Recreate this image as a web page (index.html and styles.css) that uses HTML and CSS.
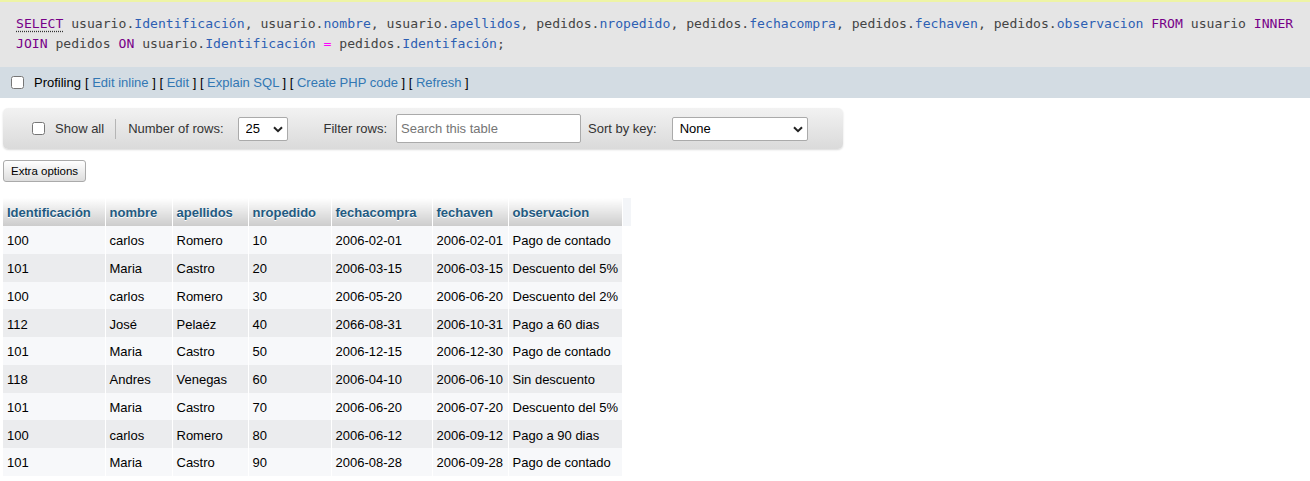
FILE: index.html
```html
<!DOCTYPE html>
<html lang="es">
<head>
<meta charset="utf-8">
<title>SQL result</title>
<link rel="stylesheet" href="styles.css">
</head>
<body>
<div class="sql-box">
  <code class="sql"><span class="kw doc">SELECT</span> usuario.<span class="var">Identificación</span>, usuario.<span class="var">nombre</span>, usuario.<span class="var">apellidos</span>, pedidos.<span class="var">nropedido</span>, pedidos.<span class="var">fechacompra</span>, pedidos.<span class="var">fechaven</span>, pedidos.<span class="var">observacion</span> <span class="kw">FROM</span> usuario <span class="kw">INNER</span> <span class="kw">JOIN</span> pedidos <span class="kw">ON</span> usuario.<span class="var">Identificación</span> <span class="op">=</span> pedidos.<span class="var">Identifación</span>;</code>
</div>
<div class="tools">
  <label class="profiling"><input type="checkbox" class="chk"> Profiling</label>
  <span class="links">[ <a href="#">Edit inline</a> ] [ <a href="#">Edit</a> ] [ <a href="#">Explain SQL</a> ] [ <a href="#">Create PHP code</a> ] [ <a href="#">Refresh</a> ]</span>
</div>
<div class="content">
  <div class="navbar">
    <label class="showall"><input type="checkbox" class="chk"> Show all</label>
    <span class="sep"></span>
    <span class="lbl">Number of rows:</span>
    <span class="sel-wrap rows">
      <select class="sel"><option>25</option></select>
      <svg class="chev" width="10" height="7" viewBox="0 0 10 7"><path d="M1 1.2 L5 5.2 L9 1.2" fill="none" stroke="#222" stroke-width="2"/></svg>
    </span>
    <span class="lbl filter">Filter rows:</span>
    <input class="search" type="text" placeholder="Search this table">
    <span class="lbl sortlbl">Sort by key:</span>
    <span class="sel-wrap sortkey">
      <select class="sel"><option>None</option></select>
      <svg class="chev" width="10" height="7" viewBox="0 0 10 7"><path d="M1 1.2 L5 5.2 L9 1.2" fill="none" stroke="#222" stroke-width="2"/></svg>
    </span>
  </div>
  <button class="extra">Extra options</button>
  <table class="data">
    <colgroup>
      <col class="c1"><col class="c2"><col class="c3"><col class="c4"><col class="c5"><col class="c6"><col class="c7"><col class="c8">
    </colgroup>
    <thead>
      <tr><th>Identificación</th><th>nombre</th><th>apellidos</th><th>nropedido</th><th>fechacompra</th><th>fechaven</th><th>observacion</th><th class="empty"></th></tr>
    </thead>
    <tbody>
      <tr><td>100</td><td>carlos</td><td>Romero</td><td>10</td><td>2006-02-01</td><td>2006-02-01</td><td>Pago de contado</td><td class="empty"></td></tr>
      <tr><td>101</td><td>Maria</td><td>Castro</td><td>20</td><td>2006-03-15</td><td>2006-03-15</td><td>Descuento del 5%</td><td class="empty"></td></tr>
      <tr><td>100</td><td>carlos</td><td>Romero</td><td>30</td><td>2006-05-20</td><td>2006-06-20</td><td>Descuento del 2%</td><td class="empty"></td></tr>
      <tr><td>112</td><td>José</td><td>Pelaéz</td><td>40</td><td>2066-08-31</td><td>2006-10-31</td><td>Pago a 60 dias</td><td class="empty"></td></tr>
      <tr><td>101</td><td>Maria</td><td>Castro</td><td>50</td><td>2006-12-15</td><td>2006-12-30</td><td>Pago de contado</td><td class="empty"></td></tr>
      <tr><td>118</td><td>Andres</td><td>Venegas</td><td>60</td><td>2006-04-10</td><td>2006-06-10</td><td>Sin descuento</td><td class="empty"></td></tr>
      <tr><td>101</td><td>Maria</td><td>Castro</td><td>70</td><td>2006-06-20</td><td>2006-07-20</td><td>Descuento del 5%</td><td class="empty"></td></tr>
      <tr><td>100</td><td>carlos</td><td>Romero</td><td>80</td><td>2006-06-12</td><td>2006-09-12</td><td>Pago a 90 dias</td><td class="empty"></td></tr>
      <tr><td>101</td><td>Maria</td><td>Castro</td><td>90</td><td>2006-08-28</td><td>2006-09-28</td><td>Pago de contado</td><td class="empty"></td></tr>
    </tbody>
  </table>
</div>
</body>
</html>
```
FILE: styles.css
```css
html, body {
  margin: 0;
  padding: 0;
  background: #fff;
}
body {
  font-family: "Liberation Sans", Arial, sans-serif;
  font-size: 13px;
  color: #000;
}

.sql-box {
  border-top: 2px solid #eef4a6;
  background: #e5e5e5;
  padding: 12px 16px 13px 16px;
}
.sql {
  display: block;
  font-family: "DejaVu Sans Mono", monospace;
  font-size: 13.1px;
  line-height: 20px;
  color: #444;
}
.sql .kw { color: #770088; }
.sql .doc {
  text-decoration: underline dotted #333;
  text-underline-offset: 3px;
}
.sql .var { color: #2d5fb3; }
.sql .op { color: #ff00ff; }

.tools {
  background: #d3dce3;
  height: 31px;
  display: flex;
  align-items: center;
  padding-left: 11px;
  color: #000;
}
.profiling {
  display: flex;
  align-items: center;
}
.chk {
  width: 13px;
  height: 13px;
  margin: 0 10px 0 0;
}
.links { margin-left: 4px; }
.links a {
  color: #3277b3;
  text-decoration: none;
}

.content {
  padding: 10px 3px 0 3px;
}

.navbar {
  width: 840px;
  height: 41px;
  box-sizing: border-box;
  border-radius: 5px;
  background: linear-gradient(#f2f2f2, #e6e6e6 50%, #dadada);
  box-shadow: 0 1px 2px rgba(0,0,0,0.15);
  display: flex;
  align-items: center;
  padding-left: 29px;
  color: #333;
}
.showall {
  display: flex;
  align-items: center;
}
.sep {
  width: 1px;
  height: 20px;
  background: #b5b5b5;
  margin: 0 12px 0 11px;
}
.lbl { white-space: nowrap; }
.sel-wrap {
  position: relative;
  display: inline-block;
}
.sel {
  -webkit-appearance: none;
  appearance: none;
  height: 24px;
  border: 1px solid #aaa;
  border-radius: 2px;
  background: #fff;
  font-family: "Liberation Sans", Arial, sans-serif;
  font-size: 13px;
  color: #000;
  padding: 0 0 0 7px;
  box-sizing: border-box;
  display: block;
}
.rows { margin-left: 14px; }
.rows .sel { width: 50px; }
.sortkey { margin-left: 15px; }
.sortkey .sel { width: 136px; }
.chev {
  position: absolute;
  right: 5px;
  top: 9px;
  pointer-events: none;
}
.filter { margin-left: 36px; }
.search {
  margin-left: 9px;
  width: 185px;
  height: 29px;
  box-sizing: border-box;
  border: 1px solid #aaa;
  border-radius: 2px;
  padding: 0 4px;
  font-family: "Liberation Sans", Arial, sans-serif;
  font-size: 13px;
  background: #fff;
}
.search::placeholder { color: #757575; }
.sortlbl { margin-left: 7px; }

.extra {
  display: block;
  margin-top: 11px;
  height: 22px;
  padding: 0 7px;
  border: 1px solid #aaa;
  border-radius: 3px;
  background: linear-gradient(#ffffff, #dddddd);
  font-family: "Liberation Sans", Arial, sans-serif;
  font-size: 11.5px;
  color: #000;
  box-sizing: border-box;
}

.data {
  margin-top: 16px;
  border-collapse: collapse;
  table-layout: fixed;
  width: 628px;
}
.c1 { width: 102px; }
.c2 { width: 67px; }
.c3 { width: 76px; }
.c4 { width: 83px; }
.c5 { width: 101px; }
.c6 { width: 76px; }
.c7 { width: 114px; }
.c8 { width: 9px; }
.data th, .data td {
  height: 27.75px;
  padding: 2px 0 0 4px;
  text-align: left;
  white-space: nowrap;
  overflow: hidden;
  box-sizing: border-box;
  border-left: 1px solid transparent;
}
.data th:first-child, .data td:first-child { border-left: 0; }
.data th {
  height: 28px;
  padding-top: 0;
  font-weight: bold;
  color: #235a81;
  text-shadow: 0 1px 0 #fff;
  background: linear-gradient(#ffffff, #cccccc);
  border-left: 1px solid #fff;
}
.data th.empty {
  background: #f3f5f8;
}
.data tbody tr:nth-child(odd) td { background: #f7f8fa; }
.data tbody tr:nth-child(even) td { background: #ebecee; }
.data tbody td.empty { background: #fff !important; }
.data td { color: #000; }
```
